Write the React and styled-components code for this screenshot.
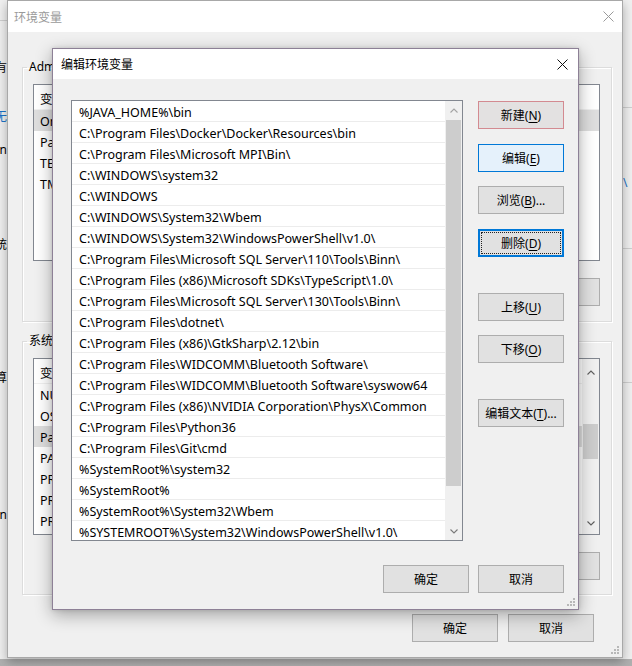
import React from 'react';
import styled, { createGlobalStyle, css } from 'styled-components';

const GlobalStyle = createGlobalStyle`
  html, body { margin: 0; padding: 0; }
  body {
    width: 632px; height: 666px; overflow: hidden;
    background: #a6a6a6;
    font-family: "Noto Sans", "Noto Sans CJK SC", sans-serif;
    font-size: 12px; color: #000;
  }
  #root { width: 632px; height: 666px; }
  * { box-sizing: border-box; }
`;

/* ---------- desktop & far window ---------- */
const Desktop = styled.div`
  position: relative;
  width: 632px;
  height: 666px;
  overflow: hidden;
  background: linear-gradient(#9e9e9e, #b0b0b0);
`;

const FarWindow = styled.div`
  position: absolute;
  left: 0; top: 0;
  width: 632px; height: 659px;
  background: #f0f0f0;
  display: flex;
  justify-content: space-between;
`;

const FarEdge = styled.div`
  width: ${p => p.$w}px;
  display: flex;
  flex-direction: column;
  overflow: hidden;
`;

const FarRule = styled.div`
  flex-shrink: 0;
  height: 1px;
  margin-top: ${p => p.$mt}px;
  background: #cfcfcf;
`;

const FarText = styled.div`
  flex-shrink: 0;
  display: flex;
  justify-content: ${p => (p.$align === 'start' ? 'flex-start' : 'flex-end')};
  white-space: nowrap;
  height: 16px;
  line-height: 16px;
  margin-top: ${p => p.$mt}px;
  font-size: 12px;
  color: ${p => (p.$blue ? '#1a73c8' : '#000')};
`;

/* ---------- windows ---------- */
const Window = styled.div`
  position: absolute;
  left: ${p => p.$x}px;
  top: ${p => p.$y}px;
  width: ${p => p.$w}px;
  height: ${p => p.$h}px;
  background: #f0f0f0;
  display: flex;
  flex-direction: column;
  ${p => p.$active
    ? css`
        border: 1px solid #8d8096;
        box-shadow: 0 5px 16px rgba(0, 0, 0, 0.32), 0 0 4px rgba(0, 0, 0, 0.12);
      `
    : css`
        border: 1px solid #a8a8a8;
        box-shadow: 0 4px 10px rgba(0, 0, 0, 0.3);
      `}
`;

const TitleBar = styled.div`
  flex-shrink: 0;
  height: ${p => p.$h}px;
  background: #fff;
  display: flex;
  align-items: center;
  justify-content: space-between;
  padding: 0 ${p => p.$pr}px 0 ${p => p.$pl}px;
  color: ${p => (p.$active ? '#000' : '#9a9a9a')};
  font-size: 12px;
`;

const CloseIcon = ({ color }) => (
  <svg width="11" height="11" viewBox="0 0 11 11">
    <path d="M0.5 0.5 L10.5 10.5 M10.5 0.5 L0.5 10.5" stroke={color} strokeWidth="1" fill="none" />
  </svg>
);

const Grip = styled.svg`
  position: absolute;
  right: 2px;
  bottom: 2px;
`;

const ResizeGrip = () => (
  <Grip width="10" height="10" viewBox="0 0 10 10">
    {[[7, 1], [4, 4], [7, 4], [1, 7], [4, 7], [7, 7]].map(([x, y]) => (
      <rect key={`${x}-${y}`} x={x} y={y} width="2" height="2" fill="#b8b8b8" />
    ))}
  </Grip>
);

/* ---------- buttons ---------- */
const Button = styled.button`
  flex-shrink: 0;
  position: relative;
  width: 86px;
  height: 28px;
  margin: ${p => p.$mt || 0}px 0 0 0;
  padding: 0;
  font: inherit;
  font-size: 12px;
  color: #000;
  background: #e1e1e1;
  border: 1px solid #adadad;
  display: flex;
  align-items: center;
  justify-content: center;
  ${p => p.$variant === 'pink' && css`border-color: #d38a91; background: #e3e1e1;`}
  ${p => p.$variant === 'hot' && css`border-color: #0078d7; background: #e5f1fb;`}
  ${p => p.$variant === 'focus' && css`
    border: 2px solid #0078d7;
    &::after {
      content: '';
      position: absolute;
      inset: 1px;
      border: 1px dotted #222;
    }
  `}
  u { text-decoration: underline; text-underline-offset: 2px; }
`;

const ButtonRow = styled.div`
  display: flex;
  justify-content: flex-end;
  gap: ${p => p.$gap}px;
  margin-top: ${p => p.$mt}px;
  margin-right: ${p => p.$mr || 0}px;
`;

const Label = ({ text, k, tail = '' }) => (
  <span>{text}(<u>{k}</u>){tail}</span>
);

/* ---------- scrollbar ---------- */
const ScrollBar = styled.div`
  flex-shrink: 0;
  width: 17px;
  background: #f0f0f0;
  display: flex;
  flex-direction: column;
`;

const ScrollArrow = styled.div`
  flex-shrink: 0;
  height: ${p => p.$h}px;
  display: flex;
  align-items: center;
  justify-content: center;
`;

const Track = styled.div`
  flex: 1;
  display: flex;
  flex-direction: column;
`;

const Thumb = styled.div`
  flex-shrink: 0;
  margin: ${p => p.$top}px 1px 0;
  height: ${p => p.$h}px;
  background: #cdcdcd;
`;

const Chevron = ({ dir, color }) => (
  <svg width="8" height="5" viewBox="0 0 8 5">
    <path
      d={dir === 'up' ? 'M0.5 4.5 L4 1 L7.5 4.5' : 'M0.5 0.5 L4 4 L7.5 0.5'}
      stroke={color}
      strokeWidth="1.1"
      fill="none"
    />
  </svg>
);

/* ---------- background dialog (环境变量) ---------- */
const BgBody = styled.div`
  flex: 1;
  display: flex;
  flex-direction: column;
  position: relative;
`;

const Group = styled.fieldset`
  margin: ${p => p.$mt}px 0 0 14px;
  width: 590px;
  padding: 9px 11px ${p => p.$pb}px 10px;
  border: 1px solid #dcdcdc;
  box-shadow: inset 1px 1px 0 #fff, 1px 1px 0 #fff;
  min-width: 0;
`;

const Legend = styled.legend`
  margin-left: -6px;
  padding: 0 2px;
  height: 16px;
  line-height: 16px;
  white-space: nowrap;
`;

const VarList = styled.div`
  height: 177px;
  background: #fff;
  border: 1px solid #828790;
  display: flex;
  font-size: 12.5px;
`;

const VarRows = styled.div`
  flex: 1;
  display: flex;
  flex-direction: column;
`;

const VarHeader = styled.div`
  height: 25px;
  flex-shrink: 0;
  display: flex;
  align-items: center;
  padding: 2px 0 0 6px;
  border-bottom: 1px solid #f0f0f0;
`;

const VarRow = styled.div`
  height: 21px;
  flex-shrink: 0;
  display: flex;
  align-items: center;
  padding: 1px 0 0 6px;
  background: ${p => (p.$sel ? '#dedede' : 'transparent')};
`;

/* ---------- edit dialog (编辑环境变量) ---------- */
const EditBody = styled.div`
  flex: 1;
  padding: 21px 14px 0 18px;
  display: flex;
  flex-direction: column;
  position: relative;
`;

const MainRow = styled.div`
  display: flex;
  gap: 15px;
`;

const PathList = styled.div`
  width: 392px;
  height: 441px;
  background: #fff;
  border: 1px solid #828790;
  display: flex;
  overflow: hidden;
`;

const PathRows = styled.div`
  flex: 1;
  display: flex;
  flex-direction: column;
  overflow: hidden;
`;

const PathRow = styled.div`
  flex-shrink: 0;
  height: 21px;
  display: flex;
  align-items: center;
  padding: 2px 0 0 7px;
  border-bottom: 1px solid #ececec;
  white-space: nowrap;
  font-size: 12.5px;
`;

const ButtonColumn = styled.div`
  display: flex;
  flex-direction: column;
  padding-top: 1px;
`;

const paths = [
  '%JAVA_HOME%\\bin',
  'C:\\Program Files\\Docker\\Docker\\Resources\\bin',
  'C:\\Program Files\\Microsoft MPI\\Bin\\',
  'C:\\WINDOWS\\system32',
  'C:\\WINDOWS',
  'C:\\WINDOWS\\System32\\Wbem',
  'C:\\WINDOWS\\System32\\WindowsPowerShell\\v1.0\\',
  'C:\\Program Files\\Microsoft SQL Server\\110\\Tools\\Binn\\',
  'C:\\Program Files (x86)\\Microsoft SDKs\\TypeScript\\1.0\\',
  'C:\\Program Files\\Microsoft SQL Server\\130\\Tools\\Binn\\',
  'C:\\Program Files\\dotnet\\',
  'C:\\Program Files (x86)\\GtkSharp\\2.12\\bin',
  'C:\\Program Files\\WIDCOMM\\Bluetooth Software\\',
  'C:\\Program Files\\WIDCOMM\\Bluetooth Software\\syswow64',
  'C:\\Program Files (x86)\\NVIDIA Corporation\\PhysX\\Common',
  'C:\\Program Files\\Python36',
  'C:\\Program Files\\Git\\cmd',
  '%SystemRoot%\\system32',
  '%SystemRoot%',
  '%SystemRoot%\\System32\\Wbem',
  '%SYSTEMROOT%\\System32\\WindowsPowerShell\\v1.0\\',
];

const userVars = ['OneDrive', 'Path', 'TEMP', 'TMP'];
const sysVars = [
  'NUMBER_OF_PROCESSORS', 'OS', 'Path', 'PATHEXT',
  'PROCESSOR_ARCHITECTURE', 'PROCESSOR_IDENTIFIER', 'PROCESSOR_LEVEL',
];

export default function App() {
  return (
    <>
      <GlobalStyle />
      <Desktop>
        <FarWindow>
          <FarEdge $w={7}>
            <FarRule $mt={20} />
            <FarText $mt={39}><span>所有</span></FarText>
            <FarText $mt={33} $blue><span>无</span></FarText>
            <FarText $mt={17}><span>Admin</span></FarText>
            <FarText $mt={79}><span>系统</span></FarText>
            <FarText $mt={117}><span>计算</span></FarText>
            <FarText $mt={121}><span>Admin</span></FarText>
          </FarEdge>
          <FarEdge $w={9}>
            <FarRule $mt={107} />
            <FarText $mt={67} $blue $align="start"><span>\</span></FarText>
            <FarRule $mt={57} />
            <FarRule $mt={133} />
          </FarEdge>
        </FarWindow>

        {/* 环境变量 */}
        <Window $x={7} $y={0} $w={616} $h={658}>
          <TitleBar $h={31} $pl={6} $pr={8}>
            <span>环境变量</span>
            <CloseIcon color="#9a9a9a" />
          </TitleBar>
          <BgBody>
            <Group $mt={27} $pb={15}>
              <Legend>Administrator 的用户变量(<u>U</u>)</Legend>
              <VarList>
                <VarRows>
                  <VarHeader>变量</VarHeader>
                  {userVars.map((v, i) => (
                    <VarRow key={v} $sel={i === 0}>{v}</VarRow>
                  ))}
                </VarRows>
              </VarList>
              <ButtonRow $gap={10} $mt={17}>
                <Button><Label text="新建" k="N" tail="..." /></Button>
                <Button><Label text="编辑" k="E" tail="..." /></Button>
                <Button><Label text="删除" k="D" /></Button>
              </ButtonRow>
            </Group>
            <Group $mt={11} $pb={14}>
              <Legend>系统变量(<u>S</u>)</Legend>
              <VarList>
                <VarRows>
                  <VarHeader>变量</VarHeader>
                  {sysVars.map((v, i) => (
                    <VarRow key={v} $sel={i === 2}>{v}</VarRow>
                  ))}
                </VarRows>
                <ScrollBar>
                  <ScrollArrow $h={27}><Chevron dir="up" color="#5f5f5f" /></ScrollArrow>
                  <Track><Thumb $top={38} $h={35} /></Track>
                  <ScrollArrow $h={21}><Chevron dir="down" color="#5f5f5f" /></ScrollArrow>
                </ScrollBar>
              </VarList>
              <ButtonRow $gap={10} $mt={17}>
                <Button><Label text="新建" k="W" tail="..." /></Button>
                <Button><Label text="编辑" k="I" tail="..." /></Button>
                <Button><Label text="删除" k="L" /></Button>
              </ButtonRow>
            </Group>
            <ButtonRow $gap={10} $mt={19} $mr={28}>
              <Button>确定</Button>
              <Button>取消</Button>
            </ButtonRow>
            <ResizeGrip />
          </BgBody>
        </Window>

        {/* 编辑环境变量 */}
        <Window $x={52} $y={48} $w={527} $h={562} $active>
          <TitleBar $h={30} $pl={8} $pr={10} $active>
            <span>编辑环境变量</span>
            <CloseIcon color="#111" />
          </TitleBar>
          <EditBody>
            <MainRow>
              <PathList>
                <PathRows>
                  {paths.map(p => (
                    <PathRow key={p}>{p}</PathRow>
                  ))}
                </PathRows>
                <ScrollBar>
                  <ScrollArrow $h={19}><Chevron dir="up" color="#a3a3a3" /></ScrollArrow>
                  <Track><Thumb $top={0} $h={366} /></Track>
                  <ScrollArrow $h={17}><Chevron dir="down" color="#7a7a7a" /></ScrollArrow>
                </ScrollBar>
              </PathList>
              <ButtonColumn>
                <Button $variant="pink"><Label text="新建" k="N" /></Button>
                <Button $variant="hot" $mt={15}><Label text="编辑" k="E" /></Button>
                <Button $mt={14}><Label text="浏览" k="B" tail="..." /></Button>
                <Button $variant="focus" $mt={15}><Label text="删除" k="D" /></Button>
                <Button $mt={36}><Label text="上移" k="U" /></Button>
                <Button $mt={14}><Label text="下移" k="O" /></Button>
                <Button $mt={36}><Label text="编辑文本" k="T" tail="..." /></Button>
              </ButtonColumn>
            </MainRow>
            <ButtonRow $gap={9} $mt={24}>
              <Button>确定</Button>
              <Button>取消</Button>
            </ButtonRow>
            <ResizeGrip />
          </EditBody>
        </Window>
      </Desktop>
    </>
  );
}
